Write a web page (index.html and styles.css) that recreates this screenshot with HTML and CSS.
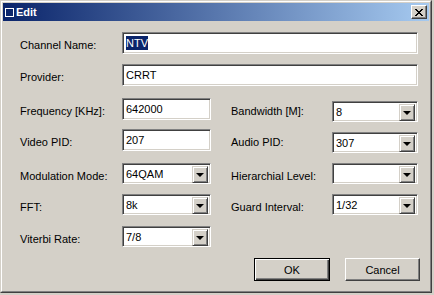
FILE: index.html
```html
<!DOCTYPE html>
<html>
<head>
<meta charset="utf-8">
<link rel="stylesheet" href="styles.css">
</head>
<body>
<div class="window">
  <div class="frame">
    <div class="titlebar">
      <span class="ticon"></span>
      <span class="ttext">Edit</span>
      <span class="close">
        <svg width="8" height="7" viewBox="0 0 8 7" shape-rendering="crispEdges"><path fill="#000" d="M0 0h2v1H0zM6 0h2v1H6zM1 1h2v1H1zM5 1h2v1H5zM2 2h4v1H2zM3 3h2v1H3zM2 4h4v1H2zM1 5h2v1H1zM5 5h2v1H5zM0 6h2v1H0zM6 6h2v1H6z"/></svg>
      </span>
    </div>
    <div class="body">
      <div class="form">
        <div class="lbl">Channel Name:</div>
        <div class="edit wide"><span class="sel">NTV</span></div>

        <div class="lbl">Provider:</div>
        <div class="edit wide">CRRT</div>

        <div class="lbl">Frequency [KHz]:</div>
        <div class="edit">642000</div>
        <div class="lbl r">Bandwidth [M]:</div>
        <div class="combo s3"><span class="val">8</span><span class="drop"><i></i></span></div>

        <div class="lbl">Video PID:</div>
        <div class="edit">207</div>
        <div class="lbl r">Audio PID:</div>
        <div class="combo s3"><span class="val">307</span><span class="drop"><i></i></span></div>

        <div class="lbl">Modulation Mode:</div>
        <div class="combo"><span class="val">64QAM</span><span class="drop"><i></i></span></div>
        <div class="lbl r">Hierarchial Level:</div>
        <div class="combo"><span class="val"></span><span class="drop"><i></i></span></div>

        <div class="lbl">FFT:</div>
        <div class="combo"><span class="val">8k</span><span class="drop"><i></i></span></div>
        <div class="lbl r">Guard Interval:</div>
        <div class="combo"><span class="val">1/32</span><span class="drop"><i></i></span></div>

        <div class="lbl">Viterbi Rate:</div>
        <div class="combo"><span class="val">7/8</span><span class="drop"><i></i></span></div>
      </div>
      <div class="buttons">
        <div class="btn default"><span>OK</span></div>
        <div class="btn"><span>Cancel</span></div>
      </div>
    </div>
  </div>
</div>
</body>
</html>
```

FILE: styles.css
```css
* { box-sizing: border-box; }
html, body { margin: 0; padding: 0; }
body {
  background: #d4d0c8;
  width: 434px;
  height: 295px;
  font-family: "Liberation Sans", Arial, sans-serif;
  font-size: 11px;
  color: #000;
  overflow: hidden;
}
.window {
  width: 432px;
  height: 293px;
  background: #d4d0c8;
  border: 1px solid;
  border-color: #d4d0c8 #404040 #404040 #d4d0c8;
  display: flex;
}
.frame {
  flex: 1;
  border: 1px solid;
  border-color: #fff #808080 #808080 #fff;
  padding: 1px;
  display: flex;
  flex-direction: column;
}
.titlebar {
  height: 18px;
  background: linear-gradient(to right, #0a246a, #a6caf0);
  display: flex;
  align-items: center;
  padding-left: 2px;
  color: #fff;
  font-weight: bold;
  font-size: 11px;
}
.ticon {
  width: 9px;
  height: 9px;
  border: 1px solid #fff;
  margin-right: 2px;
}
.close {
  margin-left: auto;
  margin-right: 2px;
  width: 16px;
  height: 14px;
  background: #d4d0c8;
  border: 1px solid;
  border-color: #fff #404040 #404040 #fff;
  box-shadow: inset -1px -1px #808080;
  display: flex;
  align-items: center;
  justify-content: center;
  padding-right: 1px;
}
.close svg { display: block; }
.body {
  flex: 1;
  display: flex;
  flex-direction: column;
  padding: 11px 9px 0 17px;
}
.form {
  display: grid;
  grid-template-columns: 102px 89px 121px 86px;
  grid-template-rows: 32px 34px 31px 34px 31px 32px 22px;
  align-items: start;
}
.lbl {
  padding-top: 6px;
  line-height: 14px;
  white-space: nowrap;
}
.lbl.r { padding-left: 20px; }
.wide { grid-column: 2 / 5; }
.edit, .combo {
  height: 22px;
  background: #fff;
  border: 1px solid;
  border-color: #808080 #fff #fff #808080;
  box-shadow: inset 1px 1px #404040, inset -1px -1px #d4d0c8;
  line-height: 20px;
  padding-left: 3px;
  white-space: nowrap;
}
.combo {
  height: 21px;
  display: flex;
  padding: 2px 2px 2px 3px;
  line-height: 17px;
}
.combo.s3 { margin-top: 3px; }
.val { flex: 1; }
.sel {
  background: #0a246a;
  color: #fff;
  padding: 1px 0;
}
.drop {
  width: 16px;
  height: 17px;
  background: #d4d0c8;
  border: 1px solid;
  border-color: #d4d0c8 #404040 #404040 #d4d0c8;
  box-shadow: inset 1px 1px #fff, inset -1px -1px #808080;
  display: flex;
  align-items: center;
  justify-content: center;
}
.drop i {
  width: 0;
  height: 0;
  border-left: 4px solid transparent;
  border-right: 4px solid transparent;
  border-top: 4px solid #000;
  margin-top: 1px;
}
.buttons {
  display: flex;
  justify-content: flex-end;
  gap: 15px;
  margin-top: 10px;
}
.btn {
  width: 75px;
  height: 23px;
  background: #d4d0c8;
  border: 1px solid;
  border-color: #fff #404040 #404040 #fff;
  box-shadow: inset -1px -1px #808080;
  display: flex;
  align-items: center;
  justify-content: center;
}
.btn.default {
  width: 76px;
  border: 1px solid #000;
  box-shadow: inset 1px 1px #fff, inset -1px -1px #404040, inset -2px -2px #808080;
}
```
